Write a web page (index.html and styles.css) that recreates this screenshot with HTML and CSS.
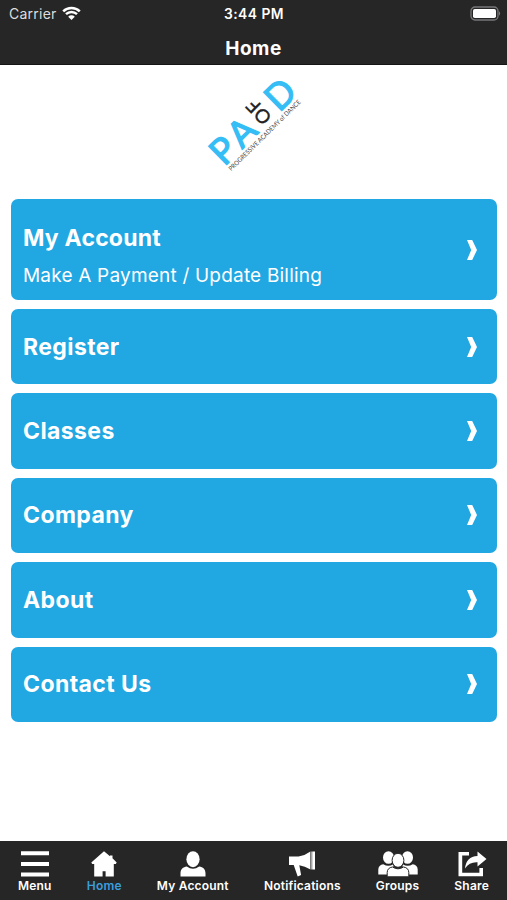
FILE: index.html
```
<!DOCTYPE html>
<html>

	<head>
		<meta charset="UTF-8">
		<title>Home</title>
		<link rel="stylesheet" href="styles.css">
	</head>

	<body>

		<div class="top">
			<div class="status">
				<div class="carrier">
					<span>Carrier</span>
					<svg width="19" height="15" viewBox="0 0 19 15">
						<path d="M1.2 5.3a12 12 0 0 1 16.6 0M4 8.2a8 8 0 0 1 11 0" fill="none" stroke="#fff" stroke-width="2.5"/>
						<path d="M6.2 10.7a4.7 4.7 0 0 1 6.6 0L9.5 14z" fill="#fff"/>
					</svg>
				</div>
				<div class="time">3:44 PM</div>
				<div class="battery">
					<svg width="32" height="16" viewBox="0 0 32 16">
						<rect x="1" y="1" width="27" height="13" rx="4" fill="none" stroke="#77777a" stroke-width="1.3"/>
						<rect x="3" y="3" width="23" height="9" rx="1.8" fill="#fff"/>
						<path d="M29 5.3q2.4 2.2 0 4.4z" fill="#77777a"/>
					</svg>
				</div>
			</div>
			<h1>Home</h1>
		</div>

		<div class="logo">
			<svg width="120" height="110" viewBox="0 0 120 110">
				<g transform="translate(31.5 97) rotate(-44.5)">
					<text class="big" x="-3" y="-0.2">P</text>
					<text class="big" x="22" y="-0.2">A</text>
					<text class="big" x="74" y="-0.2">D</text>
					<text class="tagline" x="-1" y="7.8" textLength="98" lengthAdjust="spacingAndGlyphs">PROGRESSIVE ACADEMY of DANCE</text>
				</g>
				<!-- O 和 F 是倒着排的 -->
				<text class="small" transform="translate(67.7 48.3) rotate(-135)" x="-7.5" y="6.8">O</text>
				<text class="small" transform="translate(65.5 35.5) rotate(-135)" x="-2" y="0">F</text>
			</svg>
		</div>

		<div class="list">
			<a class="item tall" href="#">
				<span class="text">
					<b>My Account</b>
					<small>Make A Payment / Update Billing</small>
				</span>
				<svg class="arrow" viewBox="0 0 10 20"><path d="M0 0h5.2L10 10 5.2 20H0L4.2 10z"/></svg>
			</a>
			<a class="item" href="#">
				<b>Register</b>
				<svg class="arrow" viewBox="0 0 10 20"><path d="M0 0h5.2L10 10 5.2 20H0L4.2 10z"/></svg>
			</a>
			<a class="item" href="#">
				<b>Classes</b>
				<svg class="arrow" viewBox="0 0 10 20"><path d="M0 0h5.2L10 10 5.2 20H0L4.2 10z"/></svg>
			</a>
			<a class="item" href="#">
				<b>Company</b>
				<svg class="arrow" viewBox="0 0 10 20"><path d="M0 0h5.2L10 10 5.2 20H0L4.2 10z"/></svg>
			</a>
			<a class="item" href="#">
				<b>About</b>
				<svg class="arrow" viewBox="0 0 10 20"><path d="M0 0h5.2L10 10 5.2 20H0L4.2 10z"/></svg>
			</a>
			<a class="item" href="#">
				<b>Contact Us</b>
				<svg class="arrow" viewBox="0 0 10 20"><path d="M0 0h5.2L10 10 5.2 20H0L4.2 10z"/></svg>
			</a>
		</div>

		<div class="tabs">
			<a href="#">
				<svg width="30" height="26" viewBox="0 0 30 26"><path d="M1 .3h28v4H1zM1 11h28v4H1zM1 21.4h28v4H1z"/></svg>
				<span>Menu</span>
			</a>
			<a class="current" href="#">
				<svg width="26" height="26" viewBox="0 0 26 26"><path d="M13 .3L19 5.2V4.5h2.500v2.800L25.700 11.500 24.800 13H22.800v12.500H14.600v-5.300h-3v5.300H3.200V13H1.200L.3 11.500z"/></svg>
				<span>Home</span>
			</a>
			<a href="#">
				<svg width="26" height="26" viewBox="0 0 26 26"><ellipse cx="13" cy="8.2" rx="6.6" ry="8"/><path d="M.5 25.5v-3.2c0-4 2.500-6.300 6.300-6.800q6.200 4.600 12.400 0c3.800.5 6.300 2.800 6.300 6.800v3.200z"/></svg>
				<span>My Account</span>
			</a>
			<a href="#">
				<svg width="28" height="26" viewBox="0 0 28 26"><path d="M1 5.500h9.500Q17 4.500 22 .7v17.600Q17 15 11.300 14.200l1.800 9.800-3.400 1.400L5.700 14H1zM22.600.4h1v18.200h-1zM24.200.4H27v18.200h-2.800z"/></svg>
				<span>Notifications</span>
			</a>
			<a href="#">
				<svg width="40" height="26" viewBox="0 0 40 26">
					<ellipse cx="10.500" cy="6.500" rx="5.500" ry="6.300"/>
					<ellipse cx="29.500" cy="6.500" rx="5.500" ry="6.300"/>
					<path d="M.3 23.500v-5c0-3 2-4.800 5-5.200q5 3 10 0v10.200zM39.700 23.500v-5c0-3-2-4.800-5-5.200q-5 3-10 0v10.200z"/>
					<ellipse class="edge" cx="20" cy="9.300" rx="5.900" ry="7"/>
					<path class="edge" d="M9.200 25.800v-4.300c0-3.200 2-5 5.300-5.500q5.500 3.600 11 0c3.300.5 5.300 2.300 5.300 5.500v4.300z"/>
				</svg>
				<span>Groups</span>
			</a>
			<a href="#">
				<svg width="30" height="26" viewBox="0 0 30 26"><path d="M12 1H1.500v24.200H26V17h-3.600v4.800H5.200V4.400H12z"/><path d="M20.500.6L29.500 8l-9 7.500v-4.200Q12.500 10.700 8 17.500 9 5.500 20.500 4.900z"/></svg>
				<span>Share</span>
			</a>
		</div>

	</body>
</html>
```
FILE: styles.css
```
* {
	margin: 0;
	padding: 0;
	box-sizing: border-box;
}

a {
	text-decoration: none;
	color: #fff;
}

svg {
	display: block;
}

body {
	height: 900px;
	display: flex;
	flex-direction: column;
	overflow: hidden;
	background: #fff;
	font-family: Inter, "Liberation Sans", sans-serif;
}

/* 顶部 */
.top {
	height: 65px;
	background: #262626;
	border-bottom: 1px solid #151515;
	color: #fff;
}

.status {
	height: 27px;
	padding: 0 5px 0 9px;
	display: grid;
	grid-template-columns: 1fr auto 1fr;
	align-items: center;
	font-size: 14px;
}

.carrier {
	display: flex;
	align-items: center;
	gap: 5px;
	color: #ddd;
	letter-spacing: .25px;
}

.time {
	padding-right: 3px;
	font-size: 13.8px;
	font-weight: 600;
	letter-spacing: .5px;
}

.battery {
	display: flex;
	justify-content: flex-end;
}

h1 {
	height: 37px;
	line-height: 43px;
	text-align: center;
	font-size: 19px;
	font-weight: 700;
	letter-spacing: .5px;
}

/* logo */
.logo {
	height: 134px;
	padding: 3px 0 0 195px;
}

.logo .big {
	font: 36px Lato, sans-serif;
	fill: #35bdf5;
	stroke: #35bdf5;
	stroke-width: 1.2;
}

.logo .small {
	font: 19px Lato, sans-serif;
	fill: #222;
	stroke: #222;
	stroke-width: .4;
}

.logo .tagline {
	font: 6.5px Lato, sans-serif;
	fill: #444;
}

/* 菜单列表 */
.list {
	padding: 0 10.5px 0 11px;
	display: flex;
	flex-direction: column;
	gap: 9px;
}

.item {
	height: 75.4px;
	padding: 0 20px 0 12px;
	display: flex;
	align-items: center;
	justify-content: space-between;
	background: #21a7e2;
	border-radius: 7px;
}

.item.tall {
	height: 101px;
}

.item .text {
	padding-top: 12px;
}

.item b {
	display: block;
	font-size: 23px;
	line-height: 28px;
	font-weight: 700;
	letter-spacing: .4px;
}

.item.tall b {
	letter-spacing: .2px;
}

.item small {
	display: block;
	margin-top: 12px;
	font-size: 19px;
	line-height: 24px;
	letter-spacing: .2px;
}

.arrow {
	width: 10px;
	height: 20px;
	fill: #fff;
}

/* 底部 */
.tabs {
	height: 59px;
	margin-top: auto;
	padding: 10px 18px 0;
	display: flex;
	justify-content: space-between;
	background: #262626;
}

.tabs a {
	display: flex;
	flex-direction: column;
	align-items: center;
	font-size: 12px;
	line-height: 17px;
	font-weight: 600;
	letter-spacing: .2px;
}

.tabs svg {
	fill: #fff;
}

.tabs .edge {
	stroke: #262626;
	stroke-width: 1;
}

.tabs .current {
	color: #3b9ddd;
}
```
